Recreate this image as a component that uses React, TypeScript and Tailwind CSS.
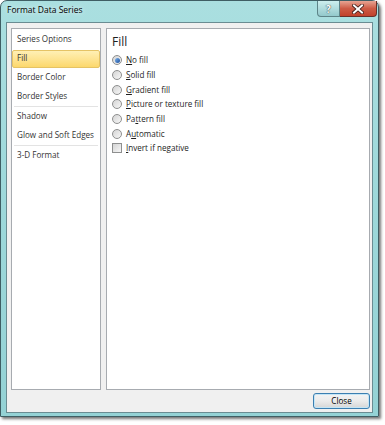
const navItems: { label: string; active?: boolean; sepAfter?: boolean }[] = [
  { label: 'Series Options' },
  { label: 'Fill', active: true },
  { label: 'Border Color' },
  { label: 'Border Styles', sepAfter: true },
  { label: 'Shadow' },
  { label: 'Glow and Soft Edges', sepAfter: true },
  { label: '3-D Format' },
]

const fillOptions: { pre: string; key: string; post: string; checked?: boolean }[] = [
  { pre: '', key: 'N', post: 'o fill', checked: true },
  { pre: '', key: 'S', post: 'olid fill' },
  { pre: '', key: 'G', post: 'radient fill' },
  { pre: '', key: 'P', post: 'icture or texture fill' },
  { pre: 'Pa', key: 't', post: 'tern fill' },
  { pre: 'A', key: 'u', post: 'tomatic' },
]

function Radio({ checked }: { checked?: boolean }) {
  return (
    <span className="flex h-[10px] w-[10px] items-center justify-center rounded-full border border-[#8e8f8f] bg-gradient-to-br from-[#d4d4d4] to-[#f7f7f7]">
      {checked && (
        <span className="h-[5px] w-[5px] rounded-full bg-gradient-to-br from-[#7db3ec] to-[#1b4f9c]" />
      )}
    </span>
  )
}

export default function App() {
  return (
    <div className="h-[425px] w-[385px] bg-white font-['Open_Sans',sans-serif] text-[8.1px] text-[#1e1e1e]">
      <div className="flex h-[417px] w-[379px] flex-col rounded-t-[7px] border border-[#3f5e64] bg-gradient-to-b from-[#aadfe0] via-[#9dd8da] to-[#94d2d5] shadow-[2px_2px_3px_rgba(0,0,0,0.55)]">
        {/* title bar */}
        <div className="flex h-[21px] items-start">
          <span className="ml-[6px] mt-[5px] text-[8.5px] leading-none text-black [text-shadow:0_0_5px_#ffffff]">
            Format Data Series
          </span>
          <div className="ml-auto mr-[1px] flex">
            <div className="flex h-[16px] w-[23px] items-center justify-center rounded-bl-[4px] border border-t-0 border-[#5d8488] bg-gradient-to-b from-[#cdeeee] to-[#93c9cc] text-[10px] font-bold leading-none text-white [text-shadow:0_0_1px_#33484b,0_0_1px_#33484b]">
              ?
            </div>
            <div className="flex h-[16px] w-[37px] items-center justify-center rounded-br-[4px] border border-l-0 border-t-0 border-[#6b2f28] bg-gradient-to-b from-[#e7a493] via-[#cd5b45] to-[#c1412b]">
              <svg width="12" height="10" viewBox="0 0 12 10">
                <path d="M2 1.5 L10 8.5 M10 1.5 L2 8.5" stroke="#3b1a16" strokeWidth="3.6" strokeLinecap="square" />
                <path d="M2 1.5 L10 8.5 M10 1.5 L2 8.5" stroke="#ffffff" strokeWidth="2" strokeLinecap="square" />
              </svg>
            </div>
          </div>
        </div>

        {/* client area */}
        <div className="mx-[5px] mb-[3px] flex flex-1 flex-col border border-[#6a8c92] bg-[#f0f0f0] pl-[4px] pr-[2px] pt-[5px]">
          <div className="flex h-[362px] gap-[5px]">
            {/* left nav */}
            <div className="w-[90px] border border-[#a7abb0] bg-white pt-[1px]">
              {navItems.map((item) => (
                <div key={item.label}>
                  <div className="flex h-[19px] items-center">
                    {item.active ? (
                      <div className="flex h-[18px] w-full items-center rounded-[2px] border border-[#e5c365] bg-gradient-to-b from-[#fff0b4] to-[#fcd86c] pl-[4px] text-[#333]">
                        {item.label}
                      </div>
                    ) : (
                      <span className="pl-[5px] text-[#333]">{item.label}</span>
                    )}
                  </div>
                  {item.sepAfter && <div className="mx-[2px] h-px bg-[#e3e3e3]" />}
                </div>
              ))}
            </div>

            {/* right panel */}
            <div className="flex-1 border border-[#a7abb0] bg-white pl-[5px] pt-[5px]">
              <div className="text-[12px] leading-[16px] text-[#1e1e1e]">Fill</div>
              <div className="mt-[3px]">
                {fillOptions.map((opt) => (
                  <div key={opt.pre + opt.key + opt.post} className="flex h-[14.67px] items-center">
                    <span className="mr-[4px]">
                      <Radio checked={opt.checked} />
                    </span>
                    <span>
                      {opt.pre}
                      <span className="underline">{opt.key}</span>
                      {opt.post}
                    </span>
                  </div>
                ))}
                <div className="flex h-[14.67px] items-center">
                  <span className="mr-[4px] h-[10px] w-[10px] border border-[#8e8f8f] bg-gradient-to-br from-[#d4d4d4] to-[#f7f7f7]" />
                  <span>
                    <span className="underline">I</span>nvert if negative
                  </span>
                </div>
              </div>
            </div>
          </div>

          {/* buttons */}
          <div className="flex justify-end py-[3px]">
            <button className="flex h-[16px] w-[57px] items-center justify-center rounded-[3px] border border-[#3c7fb1] bg-gradient-to-b from-[#f4f4f4] via-[#ebebeb] to-[#d6d6d6] text-[8.1px] leading-none text-black shadow-[inset_0_0_0_1px_#c4e5f6]">
              Close
            </button>
          </div>
        </div>
      </div>
    </div>
  )
}
